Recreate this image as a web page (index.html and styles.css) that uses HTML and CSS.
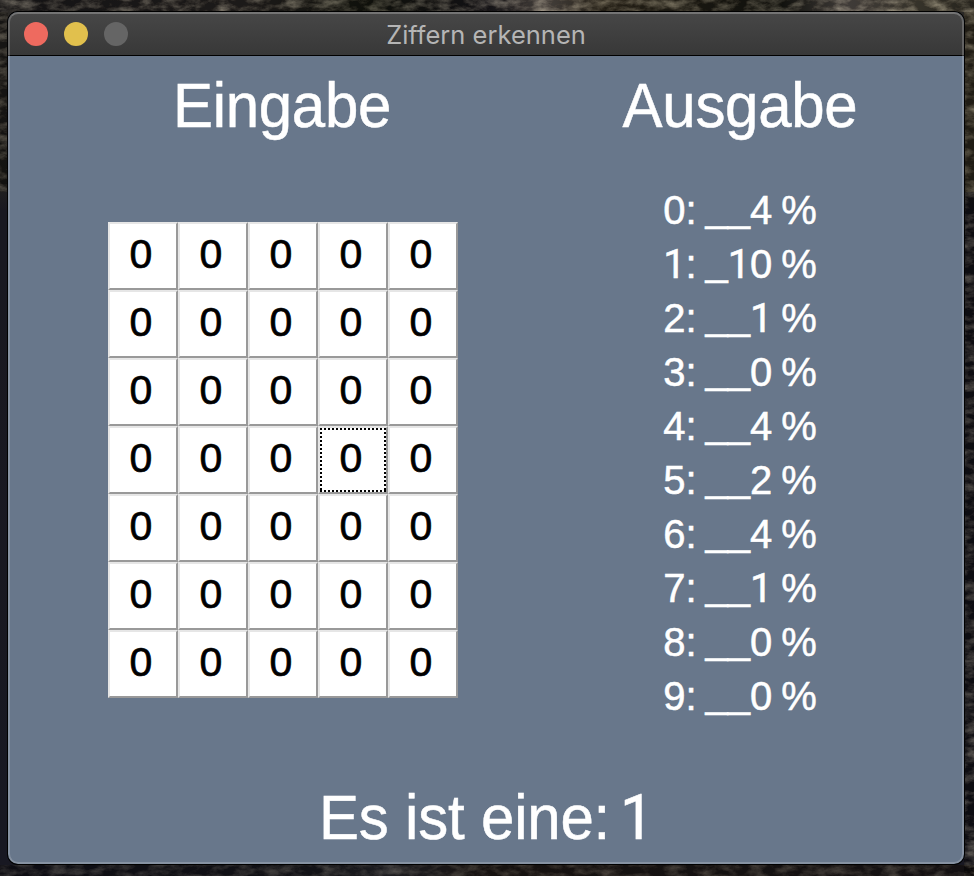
FILE: index.html
```
<!DOCTYPE html>
<html lang="de">
<head>
<meta charset="utf-8">
<title>Ziffern erkennen</title>
<link rel="stylesheet" href="styles.css">
</head>
<body>
<svg class="desktop" viewBox="0 0 974 876" aria-hidden="true">
  <defs>
    <linearGradient id="dusk" x1="0" y1="0" x2="0" y2="1">
      <stop offset="0" stop-color="#2b2927"/>
      <stop offset=".2" stop-color="#24231f"/>
      <stop offset=".24" stop-color="#191820"/>
      <stop offset="1" stop-color="#181822"/>
    </linearGradient>
    <linearGradient id="ridge">
      <stop offset="0" stop-color="#28272a"/>
      <stop offset=".25" stop-color="#3a3634"/>
      <stop offset=".38" stop-color="#1f2218"/>
      <stop offset=".5" stop-color="#25232a"/>
      <stop offset=".56" stop-color="#8a8078"/>
      <stop offset=".62" stop-color="#453d2c"/>
      <stop offset=".8" stop-color="#20211a"/>
      <stop offset=".87" stop-color="#807872"/>
      <stop offset=".95" stop-color="#6a6452"/>
      <stop offset="1" stop-color="#4a463a"/>
    </linearGradient>
    <linearGradient id="shore">
      <stop offset="0" stop-color="#13131c"/>
      <stop offset=".32" stop-color="#1a1a20"/>
      <stop offset=".4" stop-color="#2a2a30"/>
      <stop offset=".5" stop-color="#201a18"/>
      <stop offset="1" stop-color="#1c181a"/>
    </linearGradient>
    <filter id="rock" x="0" y="0" width="100%" height="100%" color-interpolation-filters="sRGB">
      <feTurbulence type="fractalNoise" baseFrequency=".06 .12" numOctaves="5" seed="8"/>
      <feColorMatrix values="1.3 0 0 0 -.48  1.25 0 0 0 -.47  1.1 0 0 0 -.42  0 0 0 0 1"/>
    </filter>
  </defs>
  <rect width="974" height="876" fill="url(#dusk)"/>
  <rect width="974" height="12" fill="url(#ridge)"/>
  <rect y="865" width="974" height="11" fill="url(#shore)"/>
  <rect width="974" height="12" filter="url(#rock)" opacity=".5"/>
  <rect y="12" width="8" height="180" filter="url(#rock)" opacity=".45"/>
  <rect x="964" y="12" width="10" height="180" fill="#3a3528"/>
  <rect x="964" y="12" width="10" height="864" filter="url(#rock)" opacity=".45"/>
  <rect y="865" width="974" height="11" filter="url(#rock)" opacity=".3"/>
</svg>
<main class="window">
  <header class="titlebar">
    <div class="lights"><i class="light close"></i><i class="light minimize"></i><i class="light zoom"></i></div>
    <div class="title">Ziffern erkennen</div>
  </header>
  <div class="columns">
    <section class="input">
      <h1>Eingabe</h1>
      <div class="grid" id="grid"></div>
    </section>
    <section class="output">
      <h1>Ausgabe</h1>
      <div class="scores">
        <p>0: <i>__</i>4 %</p>
        <p><b>1</b>: <i>_</i><b>1</b>0 %</p>
        <p>2: <i>__</i><b>1</b> %</p>
        <p>3: <i>__</i>0 %</p>
        <p>4: <i>__</i>4 %</p>
        <p>5: <i>__</i>2 %</p>
        <p>6: <i>__</i>4 %</p>
        <p>7: <i>__</i><b>1</b> %</p>
        <p>8: <i>__</i>0 %</p>
        <p>9: <i>__</i>0 %</p>
      </div>
    </section>
  </div>
  <footer class="result"><span>Es ist eine:</span><b>1</b></footer>
</main>
<script src="grid.js"></script>
</body>
</html>
```
FILE: styles.css
```
* { box-sizing: border-box; }
body {
  margin: 0;
  height: 876px;
  overflow: hidden;
  padding: 12px 10px 12px 8px;
  font-family: "Liberation Sans", Arial, sans-serif;
  color: #fff;
}
.desktop { position: absolute; inset: 0; width: 974px; height: 876px; z-index: -1; }
.window {
  position: relative;
  height: 852px;
  background: #68778b;
  border-radius: 10px;
  overflow: hidden;
  box-shadow: 0 0 0 1px #000;
}
.window::after {
  content: "";
  position: absolute;
  inset: 0;
  border: 2px solid rgba(255, 255, 255, .2);
  border-top-color: rgba(255, 255, 255, .25);
  border-radius: 10px;
  pointer-events: none;
}
.titlebar {
  display: grid;
  grid-template-columns: 1fr auto 1fr;
  align-items: center;
  height: 44px;
  border-bottom: 1px solid #000;
  background: linear-gradient(#474747, #383838);
}
.lights { display: flex; gap: 16px; padding-left: 16px; }
.light { width: 24px; height: 24px; border-radius: 50%; }
.close { background: #ee6a5f; }
.minimize { background: #e1c04d; }
.zoom { background: #656565; }
.title {
  padding-top: 1px;
  font: 25.5px/43px Inter, sans-serif;
  color: #b5b5b5;
  white-space: nowrap;
}
.columns { display: flex; height: 704px; }
.input { width: 550px; padding-left: 100px; }
.output { width: 364px; text-align: center; }
h1 {
  margin: 0;
  height: 100px;
  font-size: 60px;
  font-weight: 400;
  line-height: 99px;
  letter-spacing: -.3px;
  text-align: center;
  transform: scaleY(1.04);
  -webkit-text-stroke: .5px #fff;
}
.input h1 { width: 348px; }
.grid {
  display: grid;
  grid-template-columns: repeat(5, 70px);
  grid-auto-rows: 68px;
  margin-top: 66px;
}
.cell {
  display: flex;
  align-items: center;
  justify-content: center;
  padding: 0 4px 4px 0;
  border: 2px solid;
  border-color: #e6e6e6 #999 #999 #e6e6e6;
  background: #fff;
  color: #000;
  font-size: 41px;
  line-height: 60px;
  -webkit-text-stroke: .7px #000;
}
.focused {
  background:
    repeating-linear-gradient(90deg, #000 0 2px, #fff 2px 4px) 0 0 / 100% 2px no-repeat,
    repeating-linear-gradient(90deg, #000 0 2px, #fff 2px 4px) 0 100% / 100% 2px no-repeat,
    repeating-linear-gradient(#000 0 2px, #fff 2px 4px) 0 0 / 2px 100% no-repeat,
    repeating-linear-gradient(#000 0 2px, #fff 2px 4px) 100% 0 / 2px 100% no-repeat,
    #fff;
  background-origin: padding-box;
}
.scores { padding-top: 27px; }
.scores p {
  margin: 0;
  height: 54px;
  font-size: 40px;
  line-height: 54px;
  white-space: pre;
  word-spacing: -2.2px;
  -webkit-text-stroke: .5px #fff;
}
.scores i { display: inline-block; font-style: normal; transform: translateY(-3px); }
b { font-family: Roboto, sans-serif; font-weight: 400; }
.scores b { display: inline-block; width: 22.24px; }
.result {
  display: flex;
  gap: 10px;
  height: 104px;
  padding-left: 311px;
  font-size: 60px;
  line-height: 115px;
  letter-spacing: -.2px;
  transform: scaleY(1.04);
  -webkit-text-stroke: .5px #fff;
}
```
FILE: grid.js
```
const grid = document.getElementById("grid");
for (let i = 0; i < 35; i++) {
  const cell = document.createElement("div");
  cell.className = i === 18 ? "cell focused" : "cell";
  cell.textContent = "0";
  grid.append(cell);
}
```
